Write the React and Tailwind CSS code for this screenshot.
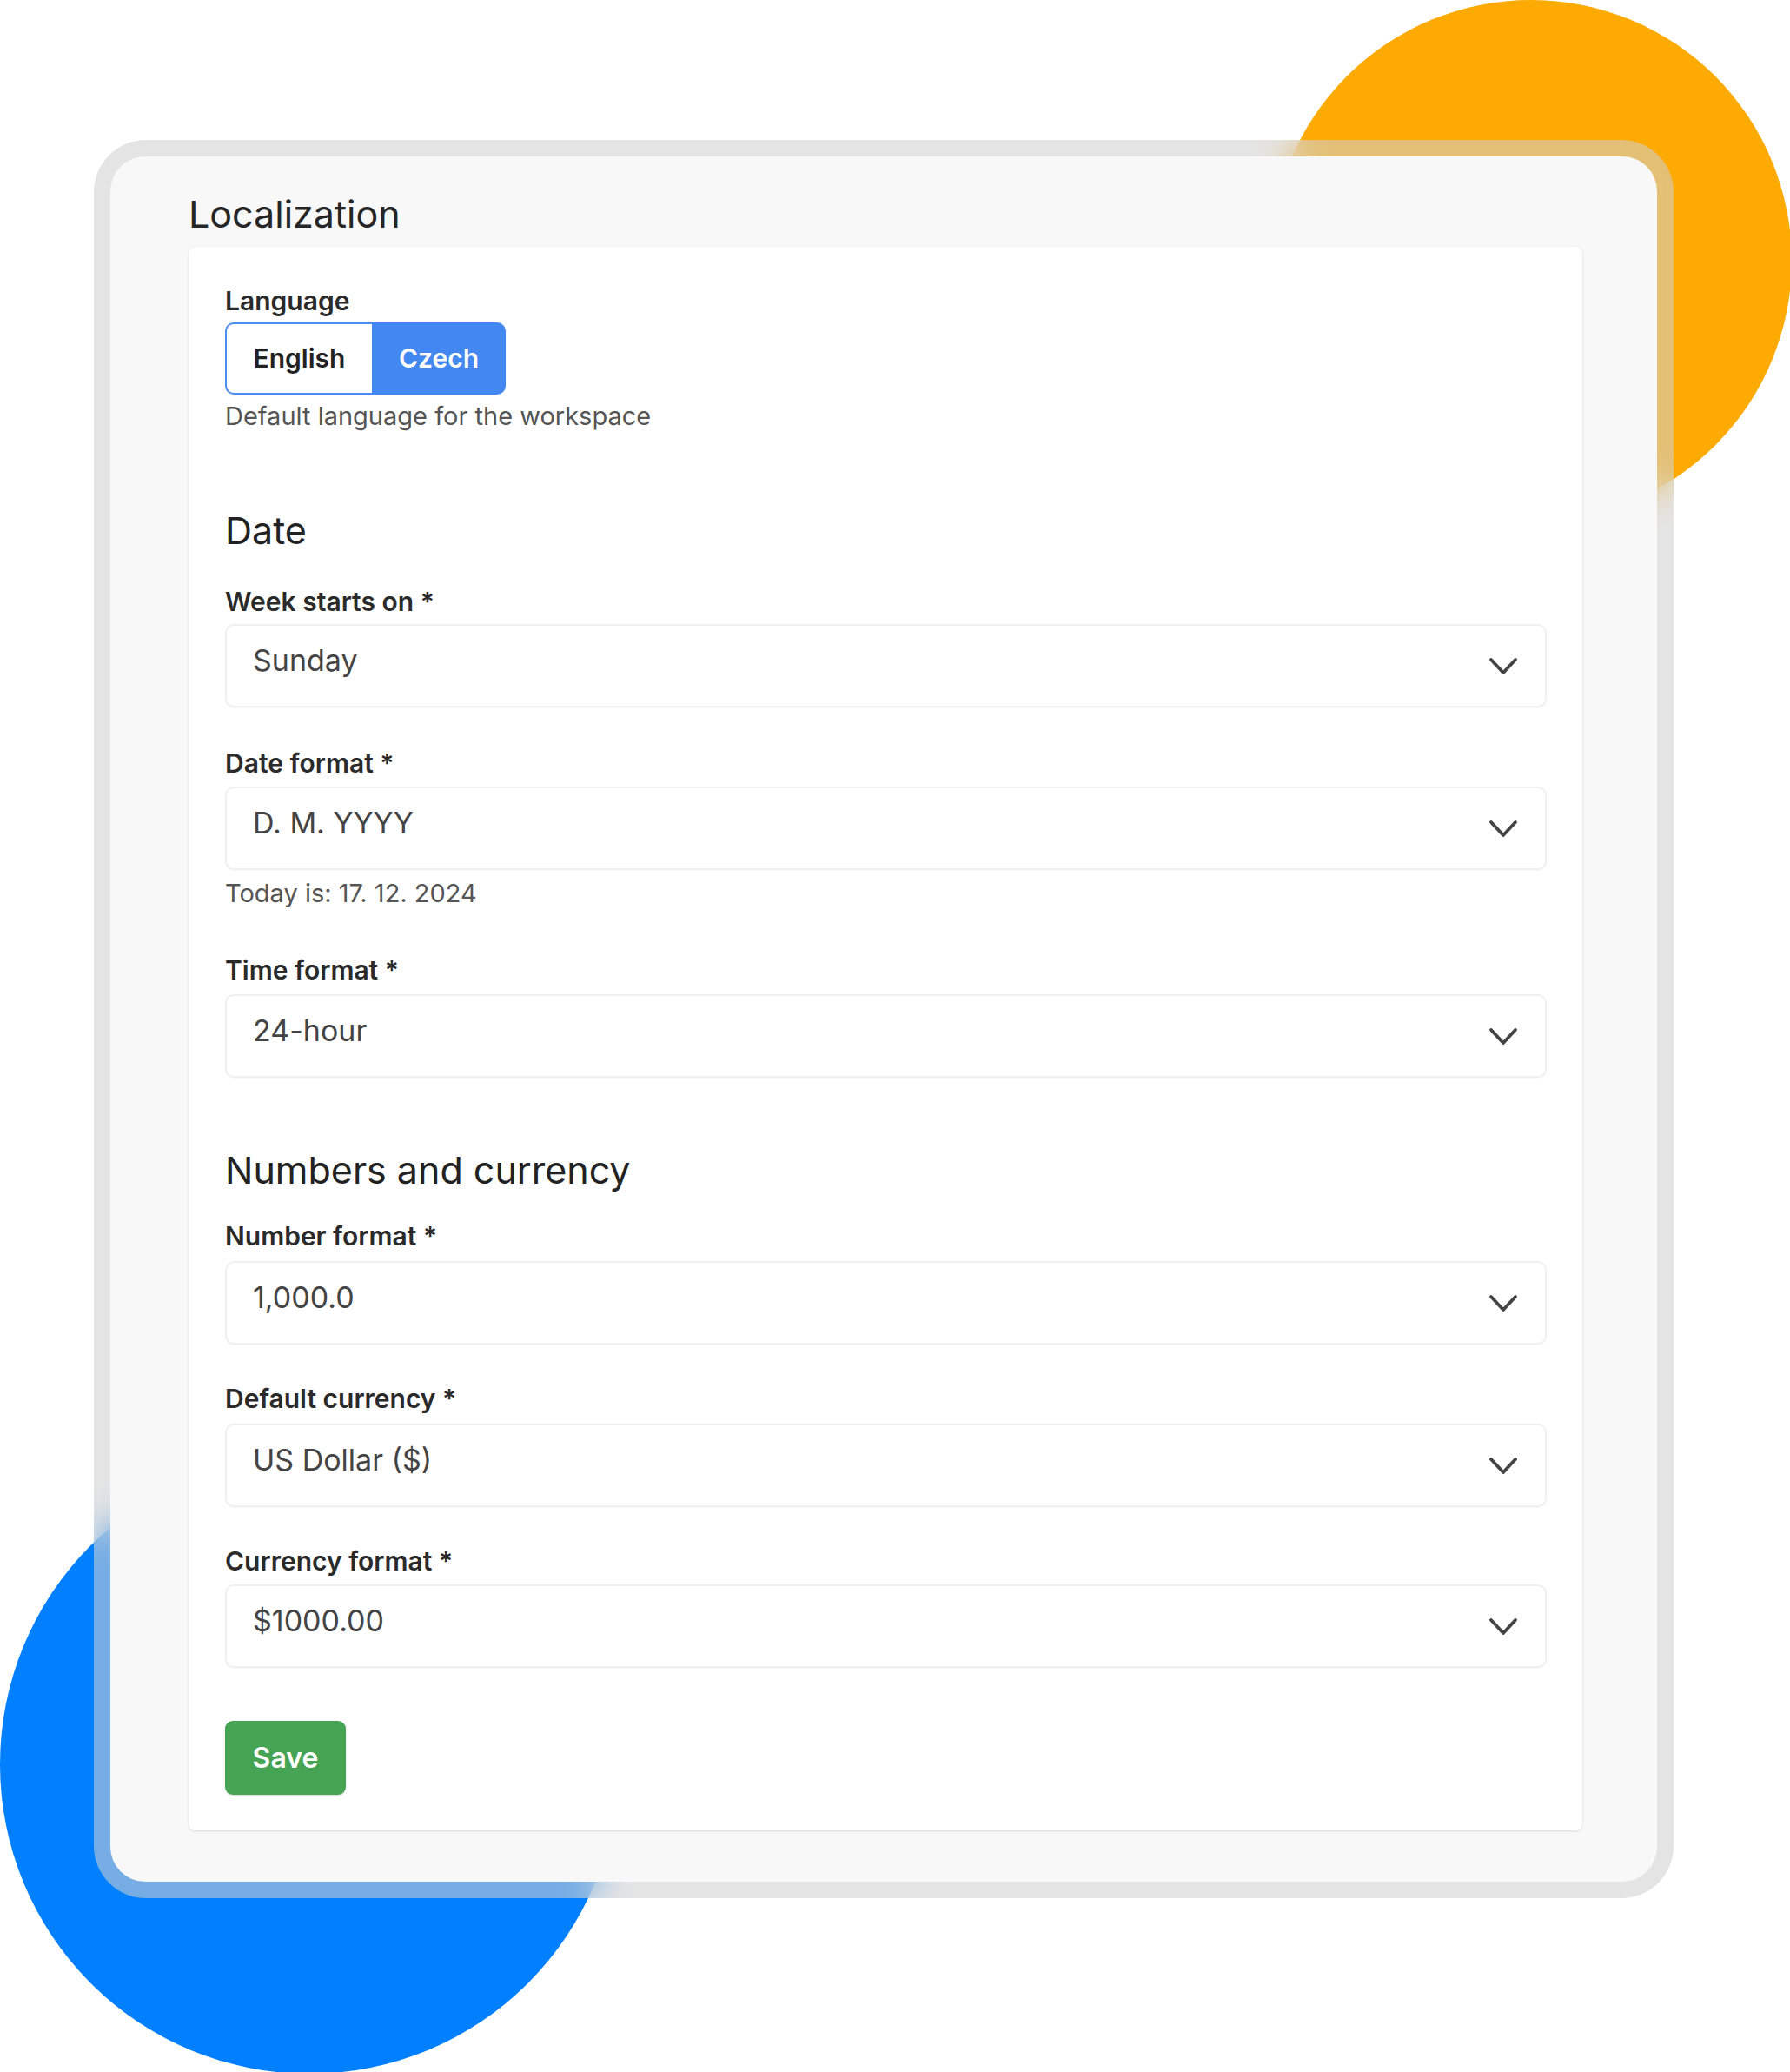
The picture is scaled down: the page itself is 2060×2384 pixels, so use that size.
const ChevronDown = () => (
  <svg width="34" height="21" viewBox="0 0 34 21" fill="none">
    <polyline
      points="3,3 17,18 31,3"
      stroke="#444"
      strokeWidth="3.8"
      strokeLinecap="round"
      strokeLinejoin="round"
    />
  </svg>
);

const Select = ({ value }) => (
  <div className="flex h-[96px] items-center justify-between rounded-[10px] border-2 border-[#f0f0f0] bg-white pl-[30px] pr-[31px] shadow-[0_1px_1px_rgba(0,0,0,0.03)]">
    <span className="mb-[14px] text-[34px] text-[#444]">{value}</span>
    <ChevronDown />
  </div>
);

const Label = ({ children }) => (
  <div className="h-10 text-[30px] font-semibold leading-10 text-[#2a2a2a]">
    {children} *
  </div>
);

const App = () => {
  return (
    <div className="relative h-[2384px] w-[2060px] overflow-hidden bg-white pl-[108px] pt-[161px] font-['Inter',sans-serif]">
      <div className="absolute left-[1462px] top-0 h-[600px] w-[600px] rounded-full bg-[#fdab02]" />
      <div className="absolute left-0 top-[1674px] h-[712px] w-[712px] rounded-full bg-[#0080ff]" />

      <div className="relative w-[1818px] rounded-[60px] bg-[rgba(208,208,208,0.57)] p-[19px] backdrop-blur-[20px]">
        <div className="rounded-[40px] bg-[#f8f8f8] pb-[59px] pl-[90px] pr-[86px] pt-[38px]">
          <h1 className="mb-[10px] text-[43px] leading-[56px] text-[#262626]">Localization</h1>

          <div className="rounded-[8px] bg-white pb-[41px] pl-[42px] pr-[41px] pt-[42px] shadow-[0_1px_3px_rgba(0,0,0,0.12)]">
            <div className="h-10 text-[30px] font-semibold leading-10 text-[#2a2a2a]">Language</div>
            <div className="mt-[5px] flex h-[83px] w-[323px]">
              <div className="flex w-[169px] items-center justify-center rounded-l-[10px] border-2 border-r-0 border-[#4a8cf0] bg-white text-[30px] font-semibold text-[#222]">
                English
              </div>
              <div className="flex w-[154px] items-center justify-center rounded-r-[10px] bg-[#4387f0] text-[30px] font-semibold text-white">
                Czech
              </div>
            </div>
            <div className="mt-[5px] h-10 text-[29px] leading-10 text-[#555]">
              Default language for the workspace
            </div>

            <h2 className="mt-[83px] text-[43px] leading-[56px] text-[#222]">Date</h2>

            <div className="mt-[34px]">
              <Label>Week starts on</Label>
              <div className="mt-[6px]">
                <Select value="Sunday" />
              </div>
            </div>

            <div className="mt-[44px]">
              <Label>Date format</Label>
              <div className="mt-[7px]">
                <Select value="D. M. YYYY" />
              </div>
              <div className="mt-[7px] h-10 text-[29px] leading-10 text-[#555]">Today is: 17. 12. 2024</div>
            </div>

            <div className="mt-[48px]">
              <Label>Time format</Label>
              <div className="mt-[8px]">
                <Select value="24-hour" />
              </div>
            </div>

            <h2 className="mt-[78px] text-[43px] leading-[56px] text-[#222]">Numbers and currency</h2>

            <div className="mt-[28px]">
              <Label>Number format</Label>
              <div className="mt-[9px]">
                <Select value="1,000.0" />
              </div>
            </div>

            <div className="mt-[42px]">
              <Label>Default currency</Label>
              <div className="mt-[9px]">
                <Select value="US Dollar ($)" />
              </div>
            </div>

            <div className="mt-[42px]">
              <Label>Currency format</Label>
              <div className="mt-[7px]">
                <Select value="$1000.00" />
              </div>
            </div>

            <button className="mt-[61px] flex h-[85px] w-[139px] items-center justify-center rounded-[9px] bg-[#45a453] text-[32px] font-semibold text-white shadow-[0_1px_2px_rgba(0,0,0,0.15)]">
              Save
            </button>
          </div>
        </div>
      </div>
    </div>
  );
};

export default App;
